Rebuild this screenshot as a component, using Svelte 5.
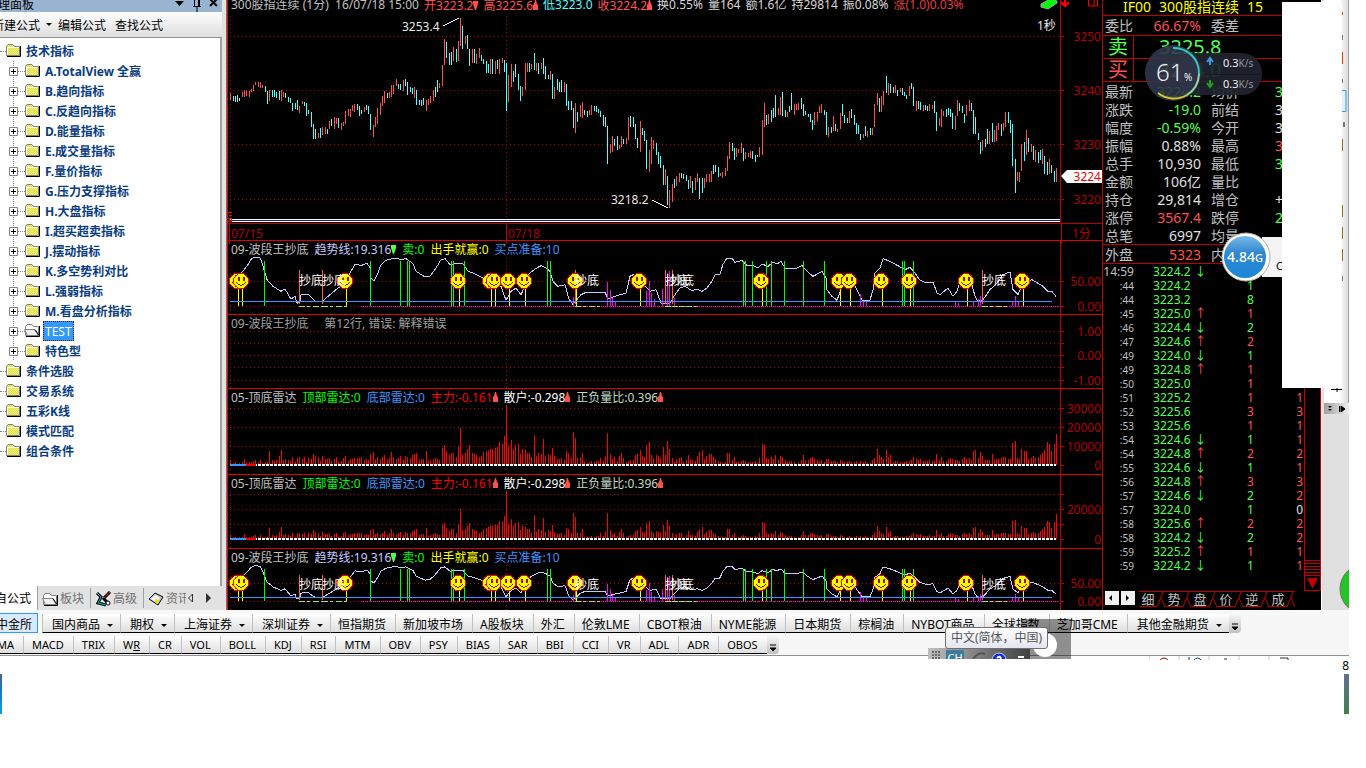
<script lang="ts">
	type Part = { text: string; color: string; mark?: 'up' | 'down' };

	const tree = [
		'A.TotalView 全赢', 'B.趋向指标', 'C.反趋向指标', 'D.能量指标', 'E.成交量指标', 'F.量价指标',
		'G.压力支撑指标', 'H.大盘指标', 'I.超买超卖指标', 'J.摆动指标', 'K.多空势利对比', 'L.强弱指标',
		'M.看盘分析指标', 'TEST', '特色型'
	];
	const roots = ['条件选股', '交易系统', '五彩K线', '模式匹配', '组合条件'];

	const markets = [
		{ name: '国内商品', menu: true }, { name: '期权', menu: true }, { name: '上海证券', menu: true },
		{ name: '深圳证券', menu: true }, { name: '恒指期货' }, { name: '新加坡市场' }, { name: 'A股板块' },
		{ name: '外汇' }, { name: '伦敦LME' }, { name: 'CBOT粮油' }, { name: 'NYME能源' }, { name: '日本期货' },
		{ name: '棕榈油' }, { name: 'NYBOT商品' }, { name: '全球指数' }, { name: '芝加哥CME' },
		{ name: '其他金融期货', menu: true }
	];
	const indicators = [
		'MACD', 'TRIX', 'WR', 'CR', 'VOL', 'BOLL', 'KDJ', 'RSI', 'MTM', 'OBV', 'PSY', 'BIAS', 'SAR',
		'BBI', 'CCI', 'VR', 'ADL', 'ADR', 'OBOS'
	];

	const head: Part[] = [
		{ text: '开3223.2', color: '#ff5050', mark: 'down' },
		{ text: '高3225.6', color: '#ff5050', mark: 'up' },
		{ text: '低3223.0', color: '#50ffff' },
		{ text: '收3224.2', color: '#ff5050', mark: 'up' },
		{ text: '换0.55%', color: '#d8d8d8' },
		{ text: '量164', color: '#d8d8d8' },
		{ text: '额1.6亿', color: '#d8d8d8' },
		{ text: '持29814', color: '#d8d8d8' },
		{ text: '振0.08%', color: '#d8d8d8' },
		{ text: '涨(1.0)0.03%', color: '#e04040' }
	];
	const bandTitle: Part[] = [
		{ text: '趋势线:19.316', color: '#c8c8ff', mark: 'down' },
		{ text: '卖:0', color: '#00ff00' },
		{ text: '出手就赢:0', color: '#ffff00' },
		{ text: '买点准备:10', color: '#3c96ff' }
	];
	const radarTitle: Part[] = [
		{ text: '顶部雷达:0', color: '#00ff00' },
		{ text: '底部雷达:0', color: '#3c96ff' },
		{ text: '主力:-0.161', color: '#ff0000', mark: 'up' },
		{ text: '散户:-0.298', color: '#ffffff', mark: 'up' },
		{ text: '正负量比:0.396', color: '#c0dcc0', mark: 'up' }
	];

	// one bar per minute: r = rising, c = falling, then top-bottom
	const bars = `r93-100 c96-101 c96-102 c95-102 c98-101 r92-97 r90-97 r91-96 r91-97 r89-92
		r85-91 r82-85 r82-87 r82-88 r85-88 c86-92 c91-104 r90-101 c90-97 c90-97
		c92-98 c91-100 r90-101 r92-97 c93-98 c97-102 c98-103 c103-111 c103-109 c100-110
		r106-113 r101-104 c102-106 c103-116 c110-114 c112-127 c124-139 c129-139 r133-138 c128-138
		r127-135 r127-134 c129-134 r121-129 c119-126 r117-129 r118-124 c118-128 r123-130 r122-126
		r111-124 r109-116 r109-117 r105-111 r104-112 c104-110 c106-116 c110-114 r107-112 c105-110
		c106-114 c114-130 r125-137 r117-127 r108-124 r103-115 r96-106 r91-103 c93-98 r92-98
		r85-97 r85-94 r79-86 c84-89 c84-90 r80-91 c79-86 c82-95 c87-92 c88-94
		r87-98 c90-105 c100-105 c100-106 c98-105 r100-111 r99-105 r96-103 r90-101 c87-97
		c80-92 r83-88 r65-86 r39-65 c42-58 c53-65 c52-65 r47-61 c49-62 r41-61
		r18-46 c26-49 r36-44 c35-49 c49-66 r49-63 c49-63 r54-64 r48-58 c55-61
		c59-64 c61-73 c64-73 r59-74 c59-74 r61-74 c60-69 r59-74 r58-63 c60-72
		c63-111 r75-102 r64-87 c71-82 c64-77 c74-90 c86-101 r87-96 r63-90 r63-72
		c63-72 r64-69 c53-70 r63-71 c63-74 r63-69 c58-74 c66-79 c75-79 r71-80
		c74-99 r87-99 c79-90 c82-92 c80-92 r82-92 c84-106 c101-110 c101-110 c108-128
		r103-133 c112-122 r105-117 r102-118 c110-115 c111-117 r110-115 r105-115 c106-111 c106-112
		c109-113 c111-117 c115-126 c117-127 c126-164 r144-153 r136-152 c139-146 c136-150 r145-149
		r136-147 c139-144 r138-144 r117-140 c116-127 c117-127 c124-139 c138-148 r121-152 c128-135
		c131-141 c140-169 r150-172 r137-164 r140-149 c143-155 c152-164 c156-168 c165-185 r169-185
		c176-205 r190-208 r184-202 c179-188 r176-186 r173-182 c173-178 c174-179 c175-181 c180-189
		r176-188 c181-193 r178-190 r173-182 c178-199 c178-193 r178-188 r174-182 r174-182 r171-182
		c165-174 c165-172 c167-177 r173-176 r172-178 r168-176 r156-171 r142-159 c143-151 c148-160
		r148-157 r149-153 r143-153 c148-161 r152-159 r153-157 r151-158 c151-159 c155-162 c155-157
		r147-157 r120-155 r103-127 c115-125 r114-124 c110-122 c108-118 c95-117 r108-115 r97-115
		c92-116 c110-117 r112-117 c106-112 c93-110 r104-115 r104-110 r103-110 c98-109 c104-116
		c111-115 c114-117 c114-122 c120-130 r112-125 r112-121 r106-113 r104-113 c110-115 c112-135
		r127-137 c127-133 r116-131 c124-131 r129-132 r113-129 c104-116 c115-123 c118-123 r111-123
		c109-118 c115-125 c123-134 c125-134 c134-140 r134-138 c126-136 r131-137 c128-135 r128-135
		r104-127 r93-105 c98-112 r96-112 r91-105 c76-93 r83-95 c84-93 c87-93 r85-93
		c90-96 r88-92 c88-95 c92-96 c95-99 r86-96 c83-89 c87-106 r101-111 c101-109
		c102-110 r105-111 c105-110 c106-111 r104-111 r105-109 c101-113 c112-131 r118-126 r109-127
		r111-116 c109-117 c108-115 c109-117 c113-129 r116-130 r100-116 c103-111 c106-113 c114-123
		r105-116 r100-111 c103-111 c110-134 c117-134 c133-140 c142-154 r140-151 c139-147 c129-144
		r131-144 c123-142 r130-142 r126-141 r123-130 c124-136 r123-131 r112-127 c112-123 c120-133
		c124-166 c159-193 r172-181 r172-182 r144-171 c142-161 r130-155 c138-152 r144-152 c146-160
		r150-162 c152-163 c150-160 r149-164 c156-174 c162-175 r159-174 c165-173 c171-182 r168-182`
		.trim()
		.split(/\s+/)
		.map((bar, i) => {
			const [top, bottom] = bar.slice(1).split('-').map(Number);
			return { x: barX(i), top, bottom, up: bar[0] === 'r' };
		});

	const volumes = `5 2 3 1 2 3 6 2 3 3 4 5 3 5 2 3 3 14 5 4 5 9 15 5 6 5 4 8 3 7
		8 6 8 3 7 6 11 9 8 4 9 6 6 7 4 6 8 3 4 7 9 5 6 6 7 7 7 8 5 6
		5 11 13 6 8 6 8 10 5 7 13 8 6 7 9 5 9 8 7 10 11 12 5 6 6 14 4 5 6 7
		6 5 17 20 14 10 12 12 8 19 37 11 12 16 20 12 11 10 8 9 13 14 15 16 16 17 18 23 21 29
		60 19 25 16 20 21 11 16 15 12 12 8 30 9 12 11 26 9 11 10 17 9 6 6 7 5 14 12 7 33
		27 7 8 12 3 2 3 4 3 4 4 7 4 9 32 11 6 8 4 9 12 7 3 4 5 5 10 11 15 9
		8 20 23 10 7 10 9 7 18 10 24 16 7 3 6 7 8 3 5 10 5 5 4 9 13 15 6 9 11 11
		8 6 4 3 2 3 12 12 5 8 3 3 4 5 4 3 3 3 4 2 7 21 20 7 6 8 6 10 5 9
		8 5 3 4 4 3 1 2 5 10 5 5 7 8 6 5 4 5 3 6 6 4 4 4 3 5 4 3 3 4
		3 3 4 2 4 3 4 2 2 5 7 16 10 8 6 15 8 10 3 4 4 3 3 3 4 4 5 8 6 5
		6 4 4 4 5 4 4 11 5 8 4 4 6 7 6 5 5 4 6 8 6 7 5 14 15 7 13 9 5 5
		5 11 5 6 6 7 8 8 6 6 22 24 7 6 16 14 14 6 7 9 7 8 10 12 15 23 21 14 21 31`
		.trim()
		.split(/\s+/)
		.map(Number);

	// trend curve, x and height above zero in thirds of a pixel
	const trend = `35,95 45,105 60,124 70,140 82,147 95,145 103,130 110,99 118,79 135,59 160,44 170,51 190,21
		200,29 207,8 215,14 220,33 240,36 260,15 285,15 300,29 325,49 345,65 370,104 380,126 400,121 418,129
		425,114 430,84 438,75 450,99 460,124 475,137 500,144 520,139 535,142 555,127 565,104 590,87 605,89
		620,109 640,139 650,142 665,124 690,129 705,127 720,104 735,99 760,87 790,71 800,67 820,59 835,17
		850,44 865,54 880,34 892,60 900,94 920,111 940,121 955,114 965,104 975,74 990,59 1010,64 1022,20
		1035,5 1060,34 1075,41 1130,41 1140,21 1160,29 1195,39 1205,89 1215,94 1240,74 1265,44 1285,49
		1300,9 1326,9 1341,34 1356,54 1371,59 1391,46 1406,51 1421,44 1436,54 1451,74 1461,94 1476,96
		1486,125 1498,144 1511,144 1521,131 1541,137 1556,121 1576,121 1591,114 1601,126 1621,119 1636,131
		1646,126 1658,134 1671,114 1706,114 1721,121 1741,102 1756,89 1781,104 1793,84 1796,49 1811,29
		1826,17 1841,59 1856,74 1881,59 1896,29 1901,18 1926,18 1936,49 1941,99 1956,114 1966,142 1986,134
		1996,129 2031,109 2046,116 2061,99 2076,77 2096,69 2116,72 2126,39 2136,34 2161,54 2176,29 2186,44
		2196,74 2216,79 2231,64 2241,29 2251,14 2266,19 2286,49 2306,69 2326,94 2346,102 2356,49 2371,34
		2386,69 2411,79 2446,59 2461,44 2471,43 2484,29`
		.trim()
		.split(/\s+/)
		.map((p) => p.split(',').map((n) => Number(n) / 3));

	const faces = [9, 13, 117, 230, 262, 266, 280, 296, 347, 411, 533, 611, 621, 653, 681, 738, 794];
	const sells = [36, 142, 172, 179, 181, 223, 225, 236, 319, 322, 515, 517, 524, 538, 543, 556, 575, 596, 674, 676, 685];
	const dips = [71, 94, 347, 437, 444, 754];
	const dipLabels = [71, 94, 347, 437, 442, 754];
	const spikes = [
		[345, 9], [379, 24], [382, 16], [384, 8], [387, 4], [418, 15], [421, 25], [423, 13], [426, 7], [434, 17],
		[439, 33], [441, 35], [446, 8], [632, 12], [635, 5], [638, 4], [727, 5], [730, 3], [745, 4], [750, 7],
		[752, 10], [784, 5], [787, 10], [790, 5]
	];

	const quotes = [
		['最新', '3224.2', 'g', '均价', '3', 'g'],
		['涨跌', '-19.0', 'g', '前结', '3', 'w'],
		['幅度', '-0.59%', 'g', '今开', '3', 'w'],
		['振幅', '0.88%', 'w', '最高', '3', 'r'],
		['总手', '10,930', 'w', '最低', '3', 'g'],
		['金额', '106亿', 'w', '量比', '', 'w'],
		['持仓', '29,814', 'w', '增仓', '+', 'w'],
		['涨停', '3567.4', 'r', '跌停', '2', 'g'],
		['总笔', '6997', 'w', '均量', '', 'w']
	];

	// time, price, direction, volume, volume colour, open interest change and its colour
	const ticks = [
		['14:59', '3224.2', '↓', '', 'g', '', 'r'],
		[':44', '3224.2', '', '1', 'g', '', 'r'],
		[':44', '3223.2', '', '8', 'g', '', 'r'],
		[':45', '3225.0', '↑', '1', 'r', '', 'r'],
		[':46', '3224.4', '↓', '2', 'g', '', 'r'],
		[':47', '3224.6', '↑', '2', 'r', '', 'r'],
		[':49', '3224.0', '↓', '1', 'g', '', 'r'],
		[':49', '3224.8', '↑', '1', 'r', '', 'r'],
		[':50', '3225.0', '', '1', 'r', '1', 'r'],
		[':51', '3225.2', '', '1', 'r', '1', 'r'],
		[':52', '3225.6', '', '3', 'r', '3', 'r'],
		[':53', '3225.6', '', '1', 'r', '1', 'r'],
		[':54', '3224.6', '↓', '1', 'g', '1', 'r'],
		[':54', '3224.8', '↑', '2', 'r', '2', 'r'],
		[':55', '3224.6', '↓', '1', 'g', '1', 'r'],
		[':56', '3224.8', '↑', '3', 'r', '3', 'r'],
		[':57', '3224.6', '↓', '2', 'g', '2', 'r'],
		[':57', '3224.0', '', '1', 'g', '0', 'w'],
		[':58', '3225.6', '↑', '2', 'r', '2', 'r'],
		[':58', '3224.2', '↓', '2', 'g', '2', 'r'],
		[':59', '3225.2', '↑', '1', 'r', '1', 'r'],
		[':59', '3224.2', '↓', '1', 'g', '1', 'r']
	];
	const tickTabs = ['细', '势', '盘', '价', '逆', '成'];

	let selected = $state('TEST');

	function barX(i: number) {
		return Math.floor(2.7 + i * 2.3);
	}
</script>

{#snippet folder(open: boolean)}
	<svg class="folder" width="16" height="15">
		<path d="M2 13.500h13.500V3" fill="none" stroke="#000" />
		<path d="M1.500 12.500v-9l1.500-2h5l1.500 2h5v9z" fill={open ? '#fff' : 'url(#check)'} stroke="#808080" />
		{#if open}
			<path d="M3.500 12.500l-3-6h10l4 6z" fill="#f0f0f0" stroke="#808080" />
			<path d="M11 6.500l4 6" stroke="#000" />
		{:else}
			<path d="M2.500 11.500v-7h11" fill="none" stroke="#fff" />
		{/if}
	</svg>
{/snippet}

{#snippet parts(list: Part[])}
	{#each list as part}
		<span style:color={part.color}
			>{part.text}{#if part.mark}<svg class="mark" width="5" height="10"
					><path
						d={part.mark === 'up' ? 'M2 0h1l1 4 1 1v5H0V5l1-1z' : 'M0 1h5v3L3 10H2L0 4z'}
						fill={part.mark === 'up' || part.color === '#ff5050' ? '#ff5050' : '#50ff50'}
					/></svg
				>{/if}</span
		>
	{/each}
{/snippet}

{#snippet face(x: number, y: number)}
	<g transform="translate({x} {y})">
		<circle r="7.500" fill="#ff0" stroke="#f00" />
		<path d="M-2.500-4v4M2.500-4v4" stroke="#c00000" stroke-width="2" />
		<path d="M-4.500 1.500Q0 7 4.500 1.500" fill="none" stroke="#c00000" />
	</g>
{/snippet}

{#snippet axis(rows: [number, string][], height: number)}
	<svg class="axis" width="42" {height}>
		<line x1="0.500" x2="0.500" y1="-16" y2={height} stroke="#c00000" />
		{#each rows as [y, label]}
			<line x1="0" x2="4" y1={y + 0.5} y2={y + 0.5} stroke="#c00000" />
			<text x="41" y={y + 5} text-anchor="end">{label}</text>
		{/each}
	</svg>
{/snippet}

{#snippet grid(rows: number[], top: number, bottom: number)}
	<g stroke="#c00000" stroke-dasharray="1 3">
		{#each rows as y}
			<line x1="2" x2="100%" y1={y + 0.5} y2={y + 0.5} />
		{/each}
		<line x1="2.500" x2="2.500" y1={top} y2={bottom} />
		<line x1="278.500" x2="278.500" y1={top} y2={bottom} />
	</g>
{/snippet}

{#snippet bandPane(height: number, zero: number, scale: number)}
	{@const middle = zero - Math.round(25 * scale)}
	{@const ready = zero - Math.round(5 * scale)}
	<section class="pane">
		<h2 class="title">09-波段王抄底 {@render parts(bandTitle)}</h2>
		<div class="plot-row">
			<svg class="plot" {height}>
				{@render grid([middle, zero], 0, height)}
				<polyline
					points={trend.map(([x, y]) => `${Math.round(x)},${zero - y * scale}`).join(' ')}
					fill="none"
					stroke="#c8c8ff"
				/>
				{#each sells as x}
					<rect {x} y={zero - 45 * scale} width="1" height={45 * scale} fill="#0f0" />
				{/each}
				{#each faces as x}
					<rect x={x + 1} y={zero - 20 * scale} width="1" height={20 * scale} fill="#ff0" />
				{/each}
				<line x1="133" x2="830" y1={zero + 0.5} y2={zero + 0.5} stroke="#f0f" stroke-dasharray="1 1" />
				{#each spikes as [x, h]}
					<rect {x} y={zero - h * scale} width="1" height={h * scale} fill="#f0f" />
				{/each}
				{#each dips as x}
					<rect {x} y={zero - 36 * scale} width="1" height={34 * scale} fill="#ff6432" />
					<line x1={x} x2={x + 25} y1={zero + 0.5} y2={zero + 0.5} stroke="#b4e632" stroke-dasharray="6 2 3 3" />
				{/each}
				<rect x="2" y={ready} width="822" height="1" fill="#3c96ff" />
				{#each faces as x}
					{@render face(x, middle)}
				{/each}
				{#each dipLabels as x}
					<text {x} y={middle + (scale < 1 ? 6 : 4)} fill="#fff">抄底</text>
				{/each}
			</svg>
			{@render axis([[middle, '50.00'], [zero, '0.00']], height)}
		</div>
	</section>
{/snippet}

{#snippet radarPane(height: number, zero: number, scale: number, rows: [number, string][])}
	<section class="pane">
		<h2 class="title">05-顶底雷达 {@render parts(radarTitle)}</h2>
		<div class="plot-row">
			<svg class="plot" {height}>
				{@render grid(rows.map(([y]) => y).filter((y) => y !== zero), 0, height)}
				{#each volumes as v, i}
					<rect x={barX(i)} y={zero - Math.round(v * scale)} width="1" height={Math.round(v * scale)} fill="#f00" />
				{/each}
				<line x1="2" x2="828" y1={zero} y2={zero} stroke="#fff" stroke-width="2" stroke-dasharray="3 1" />
				<rect x="2" y={zero - 1} width="16" height="2" fill="#3c96ff" />
				<rect x="18" y={zero - 1} width="10" height="2" fill="#f00" />
			</svg>
			{@render axis(rows, height)}
		</div>
	</section>
{/snippet}

<div class="app">
	<div class="workspace">
		<aside class="sidebar">
			<header class="caption">
				<span>公式管理面板</span>
				<svg width="46" height="12">
					<defs>
						<pattern id="check" width="2" height="2" patternUnits="userSpaceOnUse">
							<rect width="2" height="2" fill="#ff0" />
							<path d="M0 0h1v1H0zM1 1h1v1H1z" fill="#d0d0c0" />
						</pattern>
					</defs>
					<path d="M1 1h9L5.500 6z" />
					<path d="M19 6.500h8M23 6v6M20.500 0v6M25.500 0v6M24.500 0v6" fill="none" stroke="#000" />
					<path d="M36-1l7 7M43-1l-7 7" stroke="#000" stroke-width="2" />
				</svg>
			</header>
			<nav class="tools">
				<button>新建公式</button>
				<i class="caret"></i>
				<button>编辑公式</button>
				<button>查找公式</button>
			</nav>
			<ul class="tree">
				<li class="root"><i class="stub"></i>{@render folder(false)}<span>技术指标</span></li>
				{#each tree as name}
					<li class="leaf">
						<svg class="plus" width="16" height="20">
							<path d="M4.500 0v20M9 10.500h7" stroke="#808080" stroke-dasharray="1 1" />
							<path d="M0.500 6.500h8v8h-8z" fill="#fff" stroke="#808080" />
							<path d="M2 10.500h5M4.500 8v5" stroke="#000" />
						</svg>
						{@render folder(name === 'TEST')}
						<button class:selected={selected === name} onclick={() => (selected = name)}>{name}</button>
					</li>
				{/each}
				{#each roots as name}
					<li class="root"><i class="stub"></i>{@render folder(false)}<span>{name}</span></li>
				{/each}
			</ul>
			<nav class="side-tabs">
				<button class="current">自公式</button>
				<button>{@render folder(true)}板块</button>
				<button>
					<svg width="16" height="16">
						<path d="M2 2l4 4-3 6 8 2" fill="none" stroke="#000" stroke-width="3" />
						<path d="M2 2l4 4-3 6 8 2" fill="none" stroke="#0cc" />
						<path d="M9 7l6-6M8 7l6 6" stroke="#000" stroke-width="3" />
						<path d="M9 7l6-6" stroke="#d02020" />
						<circle cx="13" cy="12" r="2" fill="#fff" stroke="#000" />
					</svg>高级
				</button>
				<button class="cut">
					<svg width="16" height="14">
						<path d="M1 7l6-6 8 4-5 8z" fill="#c8c8c8" stroke="#000" />
						<path d="M3 7l5-4 4 3-4 4z" fill="#fff" />
						<path d="M6 9l3-2 2 2-2 3z" fill="#e8e000" />
					</svg>资讯
				</button>
				<svg class="arrows" width="30" height="12">
					<path d="M6.500 2v8l-4-4z" fill="none" stroke="#333" />
					<path d="M20 1v10l5-5z" fill="#333" />
				</svg>
			</nav>
		</aside>

		<main class="charts">
			<section class="price">
				<h1 class="title">
					<span>300股指连续 (1分)&nbsp; 16/07/18 15:00</span>
					{@render parts(head)}
				</h1>
				<div class="plot-row">
					<svg class="plot" height="215">
						<g transform="translate(0 -8)">
							{@render grid([36, 90, 144, 199], 16, 219)}
							{#each bars as bar}
								<rect
									x={bar.x}
									y={bar.top}
									width="1"
									height={bar.bottom - bar.top}
									fill={bar.up ? '#ff5050' : '#50ffff'}
								/>
							{/each}
							<g fill="#e8e8e8">
								<text x="174" y="31">3253.4</text>
								<text x="383" y="204">3218.2</text>
								<text x="100%" y="30" dx="-23">1秒</text>
							</g>
							<path d="M215 26l16-8M424 200l16 8" fill="none" stroke="#fff" />
							<rect x="2" y="219" width="100%" height="3" fill="#fff" />
							<rect x="2" y="220" width="100%" height="1" fill="#102080" />
							<path d="M0 212h4M1 215h3M0 218h3v3h-3" fill="none" stroke="#f00" />
						</g>
					</svg>
					<svg class="axis" width="42" height="215">
						<g transform="translate(0 -8)">
							<line x1="0.500" x2="0.500" y1="0" y2="223" stroke="#c00000" />
							{#each [[36, 3250], [90, 3240], [144, 3230], [199, 3220]] as [y, label]}
								<line x1="0" x2="4" y1={y + 0.5} y2={y + 0.5} stroke="#c00000" />
								<text x="41" y={y + 5} text-anchor="end">{label}</text>
							{/each}
							<path d="M1 176l6-6h35v13H7z" fill="#fff" />
							<text class="now" x="41" y="181" text-anchor="end">3224</text>
						</g>
					</svg>
				</div>
				<svg class="badges" width="62" height="10">
					<path d="M1 4l9-5 7 2v2l-9 6-7-2z" fill="#0f0" stroke="#a0a0a0" />
					<path d="M25 0v6M21 2l4 4 4-4" fill="none" stroke="#f00" stroke-width="2" />
					<path d="M48.500-1v7h9v-7M54 0v6" fill="none" stroke="#f00" />
				</svg>
			</section>
			<div class="dates">
				<time>07/15</time>
				<time>07/18</time>
				<span>1分</span>
			</div>
			{@render bandPane(57, 49, 1)}
			<section class="pane">
				<h2 class="title dim">09-波段王抄底&nbsp;&nbsp;&nbsp;&nbsp; 第12行, 错误: 解释错误</h2>
				<div class="plot-row">
					<svg class="plot" height="57">{@render grid([0, 12, 24, 36, 49], 0, 57)}</svg>
					{@render axis([[0, '1.00'], [12, ''], [24, '0.00'], [36, ''], [49, '-1.00']], 57)}
				</div>
			</section>
			{@render radarPane(69, 60, 1, [[3, '30000'], [22, '20000'], [41, '10000'], [60, '0']])}
			{@render radarPane(57, 48, 0.8, [[3, ''], [18, '20000'], [33, ''], [48, '0']])}
			{@render bandPane(45, 36, 0.72)}
		</main>

		<section class="quote">
			<h2 class="symbol"><span>IF00</span><span>300股指连续</span><span>15</span></h2>
			<div class="qrow ratio"><span>委比</span><b class="r">66.67%</b><span>委差</span></div>
			<div class="big"><span class="g">卖</span><b class="g">3225.8</b></div>
			<div class="big"><span class="r">买</span><b class="g">3224.0</b></div>
			{#each quotes as [label, value, tone, label2, value2, tone2]}
				<div class="qrow"><span>{label}</span><b class={tone}>{value}</b><span>{label2}</span><i class={tone2}>{value2}</i></div>
			{/each}
			<div class="qrow outer"><span>外盘</span><b class="r">5323</b><span>内盘</span></div>
			<div class="tape">
				<table>
					<tbody>
						{#each ticks as [time, price, arrow, vol, tone, change, changeTone], i}
							<tr>
								<td class="time" class:full={i === 0}>{time}</td>
								<td class="g last">{price}</td>
								<td class={arrow === '↑' ? 'r' : 'g'}>{arrow}</td>
								<td class="vol {tone}">{vol}</td>
								<td class="vol {changeTone}">{change}</td>
							</tr>
						{/each}
					</tbody>
				</table>
				<svg class="scroll" width="17" height="326">
					<path d="M0.500 0v325.500h16V0M0 295.500h16M0 298.500h16M0 301.500h16M0 304.500h16M0 307.500h16M0 310.500h16" fill="none" stroke="#c00000" />
					<path d="M3 313h11l-5 10h-1z" fill="#c00000" />
				</svg>
			</div>
			<nav class="tick-tabs">
				<button class="step" aria-label="上一页"><svg width="12" height="12"><path d="M7 3v6L4 6z" /></svg></button>
				<button class="step" aria-label="下一页"><svg width="12" height="12"><path d="M5 3v6l3-3z" /></svg></button>
				<ul>
					{#each tickTabs as tab}
						<li>
							<button>{tab}</button>
							<svg width="8" height="16"><path d="M0 15L6 0M4 6l4 9" fill="none" stroke="#c00000" /></svg>
						</li>
					{/each}
				</ul>
			</nav>
		</section>

		<div class="dock">
			<div class="dock-top">
				<svg width="26" height="400">
					<path d="M18 12v3M18 52v12" stroke="#f04000" stroke-width="2" />
					<path d="M18 35v5M18 79v4M20 122v5M18 276v5M7 389.500h11M13 388v4" stroke="#000" />
					<path d="M18 139v12M18 205v12M18 227v12M18 249v12" stroke="#907010" stroke-width="2" />
					<path d="M17 90.500h5v21h-5" fill="#e4f0fc" stroke="#3399ff" />
				</svg>
			</div>
			<div class="dock-foot">
				<svg width="26" height="11">
					<path d="M4 3h4L6 5zM4 6h4L6 8z" />
					<path d="M15.500 3v6M17 3v6l4-3z" stroke="#000" />
				</svg>
			</div>
			<svg class="ball" width="10" height="60">
				<circle cx="26" cy="27" r="25" fill="#24c424" stroke="#707070" />
			</svg>
		</div>

		<div class="blank"></div>

		<div class="meter">
			<svg width="118" height="60">
				<rect x="32" y="9" width="85" height="42" rx="20" fill="#20242e" fill-opacity="0.93" />
				<path d="M60 30.500h56" stroke="#15181f" />
				<circle cx="28" cy="29" r="28" fill="#30354a" fill-opacity="0.9" />
				<path d="M28 4a25 25 0 0 1 26 26" fill="none" stroke="#30c8c0" stroke-width="2" />
				<path d="M54 30a26 26 0 0 1-12 21" fill="none" stroke="#90d8a0" stroke-width="2" />
				<path d="M42 51a26 26 0 0 1-29-2" fill="none" stroke="#d8c830" stroke-width="2" />
				<path d="M65 21v-6M62 18l3-4 3 4" fill="none" stroke="#30a0e8" stroke-width="2" />
				<path d="M65 36v6M62 39l3 4 3-4" fill="none" stroke="#20a020" stroke-width="2" />
				<g fill="#f0f0f0">
					<text x="11" y="37" font-size="24" class="thin">61</text>
					<text x="39" y="37" font-size="10">%</text>
					<text x="78" y="23" font-size="11">0.3<tspan fill="#90949c" font-size="10">K/s</tspan></text>
					<text x="78" y="44" font-size="11">0.3<tspan fill="#90949c" font-size="10">K/s</tspan></text>
				</g>
			</svg>
		</div>
		<div class="memory">
			<span>C</span>
			<svg width="52" height="52">
				<defs>
					<linearGradient id="blue" x1="0" y1="0" x2="0" y2="1">
						<stop offset="0" stop-color="#7ab8e8" />
						<stop offset="0.4" stop-color="#2f88d0" />
						<stop offset="1" stop-color="#1c86d8" />
					</linearGradient>
				</defs>
				<circle cx="26" cy="26" r="24" fill="#fff" stroke="#b0b0b0" />
				<circle cx="25" cy="26" r="21" fill="url(#blue)" />
				<text x="25" y="31" text-anchor="middle" font-size="14" font-weight="500" fill="#fff">4.84<tspan font-size="11">G</tspan></text>
			</svg>
		</div>
	</div>

	<footer class="bars">
		<nav class="bar markets">
			<button class="active">中金所</button>
			{#each markets as item}
				<button class:menu={item.menu}>{item.name}{#if item.menu}<i class="caret"></i>{/if}</button>
			{/each}
			<button class="more" aria-label="更多市场"><svg width="8" height="10"><path d="M1 2h6M1 5h6L4 8z" stroke="#000" /></svg></button>
		</nav>
		<nav class="bar indicators">
			<button class="first">MA</button>
			{#each indicators as name}
				<button>{#if name === 'WR'}W<u>R</u>{:else}{name}{/if}</button>
			{/each}
			<button class="more" aria-label="更多指标"><svg width="8" height="10"><path d="M1 2h6M1 5h6L4 8z" stroke="#000" /></svg></button>
		</nav>
		<div class="bits">
			<svg width="200" height="4">
				<path d="M0 0v5M30 0v5M60 0v5M90 0v5M120 0v5" stroke="#c8c8c8" />
				<path d="M10 5q5-6 10 0" fill="none" stroke="#a00000" />
				<path d="M40 1v4M44 5q5-6 9 0" fill="none" stroke="#004080" />
				<path d="M75 3h3M131 2h8v3" fill="none" stroke="#333" />
			</svg>
		</div>
		<div class="shade">
			<svg width="50" height="40"><circle cx="24" cy="26" r="12" fill="#fff" /></svg>
		</div>
		<div class="langbar">
			<svg width="102" height="11">
				<path d="M4 4h8M4 7h8M4 10h8" stroke="#222" stroke-dasharray="2 1" />
				<path d="M45 11q6-8 12-5" fill="none" stroke="#555" stroke-width="2" />
				<circle cx="71" cy="12" r="7" fill="#1030d0" stroke="#d0d0e0" />
				<path d="M69 10q3-3 4 1" fill="none" stroke="#fff" stroke-width="2" />
				<path d="M90 9h6" stroke="#fff" stroke-width="2" />
			</svg>
			<span>CH</span>
		</div>
		<div class="tip" role="tooltip">中文(简体，中国)</div>
	</footer>

	<div class="desktop">
		<i class="left"></i>
		<span>8</span>
		<i class="right"></i>
	</div>
</div>

<style>
	:global(body) {
		background: #fff;
	}

	.app {
		font: 12px/16px "Noto Sans", "Noto Sans CJK SC", sans-serif;
		overflow: hidden;
		min-height: 100vh;
		color: #000;
	}

	button {
		font: inherit;
		color: inherit;
		background: none;
		border: 0;
		padding: 0;
		white-space: nowrap;
		cursor: pointer;
	}

	h1,
	h2,
	ul {
		margin: 0;
		padding: 0;
		font: inherit;
		list-style: none;
	}

	svg {
		display: block;
		flex: none;
	}

	.caret {
		border: 3px solid transparent;
		border-top-color: #000;
		border-bottom: 0;
	}

	.workspace {
		position: relative;
		display: flex;
		margin-right: 17px;
	}

	/* formula panel */
	.sidebar {
		display: flex;
		flex-direction: column;
		width: 227px;
		flex: none;
		background: #e2e2e2;
		border-right: 1px solid #707070;
		box-sizing: border-box;
	}

	.caption {
		display: flex;
		justify-content: space-between;
		height: 12px;
		margin-right: 4px;
		padding-right: 2px;
		background: #99b4d1;
		line-height: 10px;
	}

	.caption span {
		margin-left: -38px;
	}

	.tools {
		display: flex;
		align-items: center;
		gap: 9px;
		height: 25px;
		margin-right: 4px;
		background: linear-gradient(#fdfdfd, #dedede);
	}

	.tools button {
		padding-top: 2px;
	}

	.tools button:first-child {
		margin-left: -8px;
	}

	.tools .caret {
		margin: 0 -3px;
	}

	.tree {
		flex: 1;
		margin-right: 4px;
		padding-top: 3px;
		border-top: 1px solid #909090;
		border-right: 2px solid #a0a0a0;
		background: #fff;
		font-weight: bold;
		color: #0a3c82;
	}

	.tree li {
		display: flex;
		align-items: center;
		height: 20px;
	}

	.tree .folder {
		margin: 0 0 2px -1px;
	}

	.root .stub {
		width: 6px;
		border-top: 1px dotted #808080;
	}

	.root span {
		margin-left: 5px;
		padding-top: 2px;
	}

	.leaf {
		padding-left: 9px;
	}

	.leaf button {
		padding: 1px 1px 0;
		margin-left: 3px;
		border: 1px solid transparent;
		line-height: 17px;
	}

	.leaf .selected {
		background: #3399ff;
		border: 1px dotted #402000;
		color: #fff;
		font-weight: normal;
	}

	.side-tabs {
		display: flex;
		align-items: center;
		height: 24px;
		color: #707070;
	}

	.side-tabs button {
		display: flex;
		align-items: center;
		gap: 2px;
		height: 20px;
		padding: 2px 6px 0 4px;
		border-right: 1px solid #a0a0a0;
		box-sizing: border-box;
	}

	.side-tabs .current {
		width: 38px;
		height: 24px;
		padding: 2px 6px 0 0;
		justify-content: flex-end;
		background: #fff;
		color: #000;
	}

	.side-tabs .cut {
		flex: none;
		width: 42px;
		padding-right: 0;
		border: 0;
		overflow: hidden;
	}

	/* charts */
	.charts {
		flex: 1;
		min-width: 0;
		background: #000;
		border-left: 1px solid #e00000;
		box-sizing: border-box;
		color: #c0c0c0;
	}

	.price {
		position: relative;
	}

	.title {
		display: flex;
		gap: 6px;
		height: 16px;
		padding-left: 3px;
		line-height: 18px;
		white-space: nowrap;
	}

	.price .title {
		gap: 5px;
		height: 8px;
		line-height: 9px;
	}

	.dim {
		color: #a0a0a0;
	}

	.mark {
		display: inline-block;
	}

	.plot-row {
		display: flex;
	}

	.plot {
		flex: 1;
		min-width: 0;
		overflow: hidden;
		shape-rendering: crispEdges;
	}

	.axis {
		overflow: visible;
	}

	.axis text {
		fill: #b40000;
	}

	.axis .now {
		fill: #f00000;
	}

	.badges {
		position: absolute;
		top: 0;
		right: 0;
	}

	.dates {
		display: grid;
		grid-template-columns: 277px 1fr 41px;
		height: 16px;
		line-height: 20px;
		border-top: 1px solid #c00000;
		color: #b40000;
	}

	.dates time {
		margin-left: 1px;
		padding-left: 1px;
		border-left: 1px solid #c00000;
	}

	.dates span {
		padding-left: 10px;
		border-left: 1px solid #c00000;
	}

	.pane {
		border-top: 1px solid #e00000;
	}

	/* quote board */
	.quote {
		width: 219px;
		flex: none;
		box-sizing: border-box;
		border-left: 1px solid #c00000;
		background: #000;
		color: #c0c0c0;
		font-size: 14px;
	}

	.r {
		color: #ff5050;
	}

	.g {
		color: #50ff50;
	}

	.w {
		color: #e0e0e0;
	}

	.symbol {
		display: flex;
		gap: 8px;
		height: 15px;
		padding-left: 20px;
		border-bottom: 1px solid #c00000;
		line-height: 13px;
		color: #ffff00;
	}

	.qrow {
		display: grid;
		grid-template-columns: 30px 66px 64px 1fr;
		height: 18px;
		padding-left: 2px;
		line-height: 20px;
	}

	.qrow b,
	.qrow i,
	.big b {
		font-weight: normal;
		font-style: normal;
	}

	.qrow b {
		text-align: right;
	}

	.qrow b + span {
		padding-left: 10px;
	}

	.qrow i {
		padding-left: 10px;
	}

	.ratio,
	.outer {
		height: 19px;
		border-bottom: 1px solid #c00000;
	}

	.outer {
		height: 18px;
		border-top: 1px solid #c00000;
	}

	.big {
		display: flex;
		height: 22px;
		border-bottom: 1px solid #c00000;
		font-size: 20px;
		line-height: 22px;
	}

	.big span {
		width: 30px;
		text-align: center;
		border-right: 1px solid #c00000;
	}

	.big b {
		padding-left: 25px;
	}

	.tape {
		display: flex;
		padding-top: 1px;
		font-size: 12px;
	}

	.tape table {
		flex: 1;
		height: 308px;
		border-spacing: 0;
		table-layout: fixed;
	}

	.tape td {
		height: 14px;
		padding: 0;
		line-height: 14px;
	}

	.tape .time {
		width: 31px;
		text-align: right;
		font-size: 10px;
	}

	.tape .full {
		font-size: 12px;
	}

	.tape .last {
		width: 57px;
		text-align: right;
		padding-right: 4px;
	}

	.tape .vol {
		width: 48px;
		text-align: right;
	}

	.tape .vol:last-child {
		width: 50px;
		padding-right: 1px;
	}

	.tick-tabs {
		display: flex;
		align-items: flex-start;
		height: 18px;
	}

	.tick-tabs ul {
		display: flex;
		margin-left: 4px;
		border-top: 1px solid #c00000;
	}

	.tick-tabs li {
		display: flex;
		height: 15px;
		line-height: 15px;
		font-size: 13px;
	}

	.tick-tabs li button {
		width: 18px;
		border-bottom: 1px solid #c00000;
	}

	.step {
		width: 14px;
		height: 14px;
		margin-left: 2px;
		background: #f0f0f0;
	}

	/* docked strip on the right */
	.dock {
		position: relative;
		width: 28px;
		flex: none;
		padding-left: 2px;
		box-sizing: border-box;
		background: #e0e0e0;
		border-left: 1px solid #fff;
	}

	.dock-top {
		height: 403px;
		background: linear-gradient(to right, #fff 60%, #d8d8d8);
		box-shadow: inset -1px 0 #a0a0a0;
	}

	.dock-foot {
		height: 11px;
		background: linear-gradient(to right, #a0a0a0, #f0f0f0);
	}

	.ball {
		position: absolute;
		right: 0;
		top: 562px;
	}

	.blank {
		position: absolute;
		top: 2px;
		right: 7px;
		width: 60px;
		height: 386px;
		background: #fff;
	}

	.meter {
		position: absolute;
		top: 44px;
		right: 86px;
	}

	.thin {
		font-weight: 300;
	}

	.memory {
		position: absolute;
		top: 231px;
		right: 67px;
		width: 62px;
	}

	.memory span {
		position: absolute;
		top: 6px;
		right: 0;
		width: 20px;
		height: 40px;
		padding-left: 14px;
		box-sizing: border-box;
		overflow: hidden;
		background: #f4f4f4;
		font-size: 11px;
		line-height: 58px;
	}

	.memory svg {
		position: relative;
	}

	/* bottom toolbars */
	.bars {
		position: relative;
		margin-right: 17px;
		padding-top: 4px;
		background: #f7f7f7;
	}

	.bar {
		display: flex;
		align-items: stretch;
	}

	.bar button {
		padding: 0 9px 0 7px;
		border-left: 1px solid #c0c0c0;
		border-bottom: 1px solid #000;
		background: linear-gradient(#fff, #dedede);
	}

	.markets {
		height: 19px;
		margin-bottom: 3px;
		line-height: 14px;
	}

	.markets button {
		padding-top: 4px;
	}

	.markets .menu {
		display: flex;
		align-items: center;
		gap: 7px;
		padding: 4px 7px 0 9px;
	}

	.markets .active {
		width: 38px;
		margin: -1px 4px 0 0;
		padding: 4px 5px 0 0;
		border: 1px solid #3399ff;
		border-left: 0;
		background: #d8eafc;
		direction: rtl;
		box-sizing: border-box;
	}

	.indicators {
		height: 18px;
		padding-bottom: 1px;
		border-bottom: 1px solid #909090;
		font-size: 11px;
	}

	.indicators button {
		padding: 0 9px 0 8px;
	}

	.indicators .first {
		margin-left: -12px;
	}

	.bar .more {
		padding: 6px 2px 0;
		border: 0;
		border-radius: 0 0 4px 0;
		background: linear-gradient(#f7f7f7, #c0c0c0);
	}

	.bits {
		display: flex;
		justify-content: flex-end;
		height: 4px;
		background: #fff;
	}

	.shade {
		position: absolute;
		top: 9px;
		left: 1021px;
		background: rgba(0, 0, 0, 0.42);
	}

	.langbar {
		position: absolute;
		top: 38px;
		left: 928px;
		height: 11px;
		overflow: hidden;
		background: linear-gradient(to right, #c0c0c0, #707070 60%, #404040);
	}

	.langbar span {
		position: absolute;
		top: 2px;
		left: 18px;
		width: 18px;
		height: 16px;
		background: #3c7c9c;
		color: #fff;
		text-align: center;
		font-size: 11px;
	}

	.tip {
		position: absolute;
		top: 17px;
		left: 945px;
		padding: 1px 5px;
		border: 1px solid #707070;
		border-radius: 3px;
		background: linear-gradient(#fff, #e4e5f0);
		color: #555;
		line-height: 18px;
	}

	.desktop {
		display: flex;
		justify-content: space-between;
		height: 54px;
		margin-right: 17px;
	}

	.desktop i {
		width: 2px;
		margin-top: 14px;
		background: linear-gradient(#506080, #1878b8 40%, #10a0d0);
	}

	.desktop .right {
		width: 5px;
		background: linear-gradient(#607090, #408050);
	}

	.desktop span {
		margin: -2px -5px 0 auto;
	}
</style>
